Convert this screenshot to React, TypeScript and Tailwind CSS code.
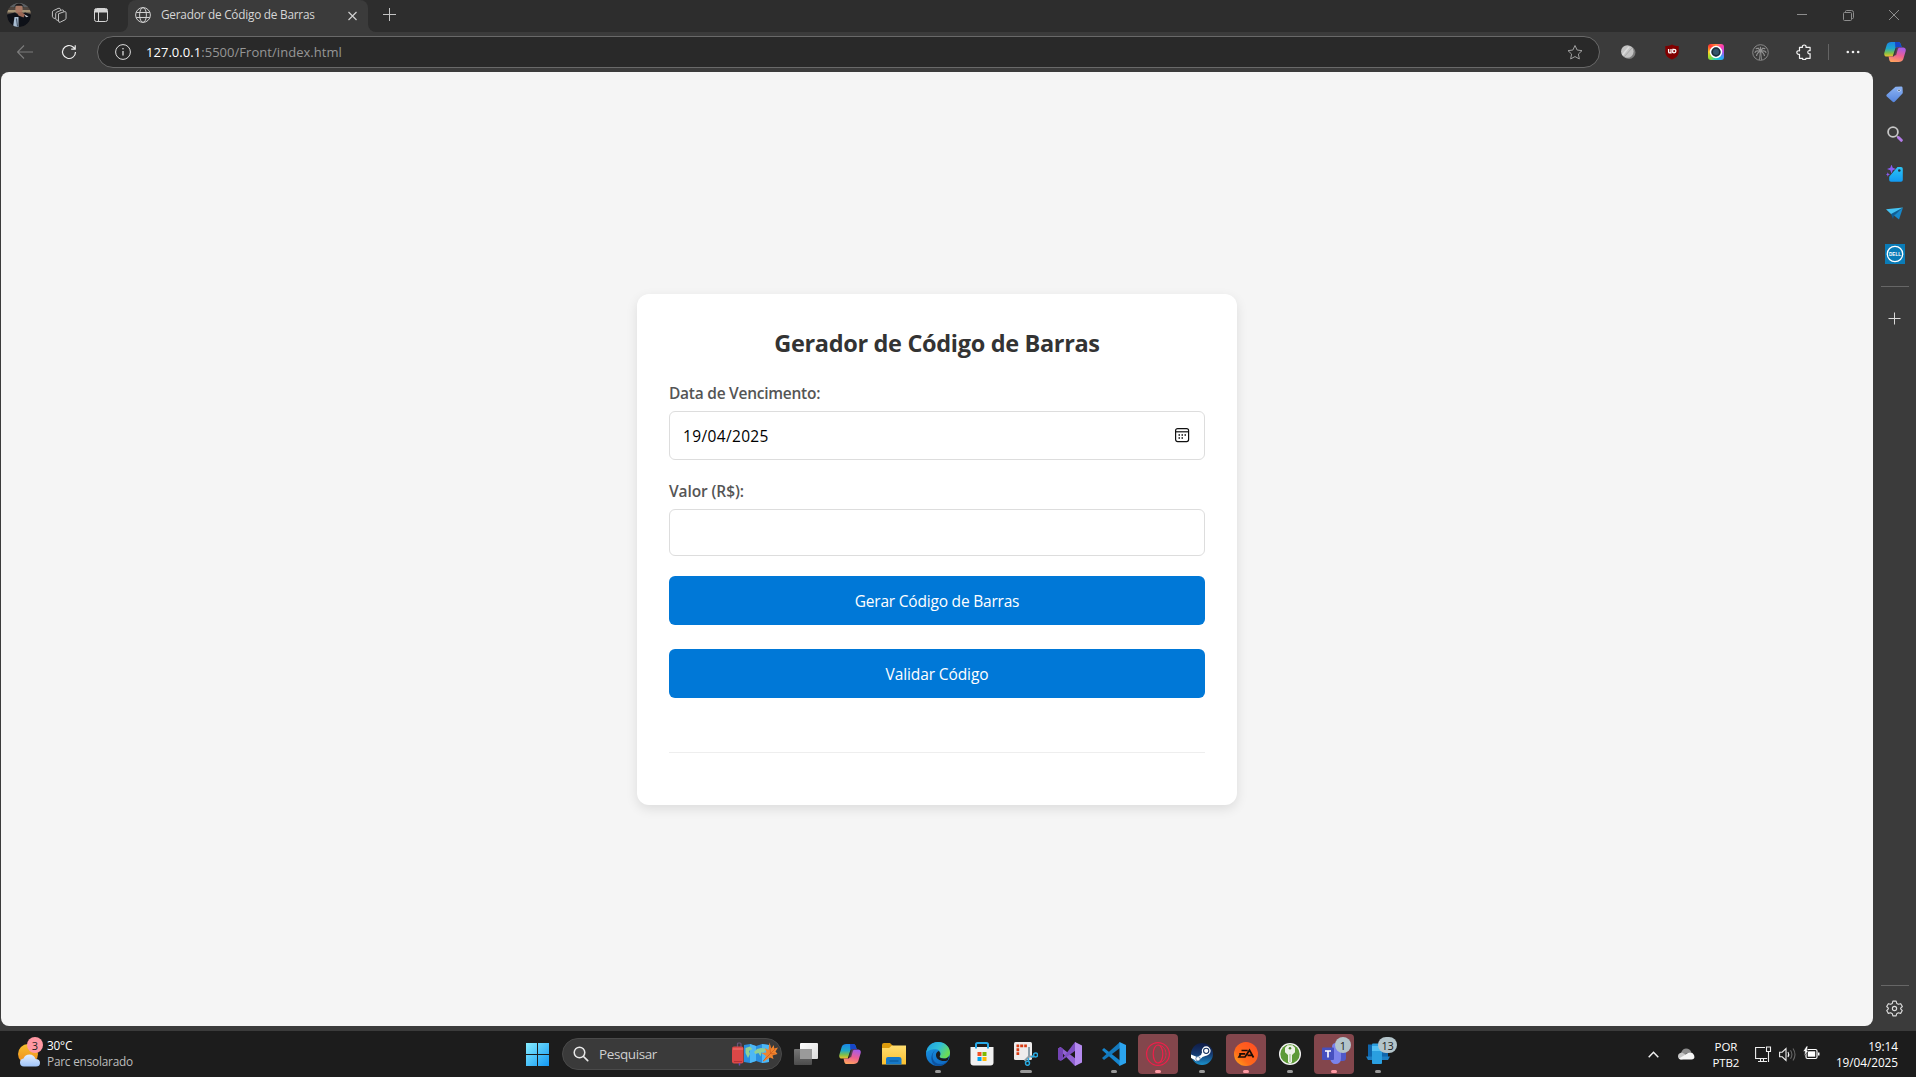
import React from "react";

type P = { children?: React.ReactNode; className?: string };

function Cell({ children, className = "" }: P) {
  return <div className={`flex shrink-0 items-center justify-center ${className}`}>{children}</div>;
}

function Copilot({ size, id }: { size: number; id: string }) {
  return (
    <svg width={size} height={size} viewBox="0 0 24 24">
      <defs>
        <linearGradient id={`${id}a`} x1="0" y1="0" x2="0" y2="1">
          <stop offset="0" stopColor="#1a86e8" />
          <stop offset=".45" stopColor="#1fa8c8" />
          <stop offset=".75" stopColor="#7fc04a" />
          <stop offset="1" stopColor="#f2c12b" />
        </linearGradient>
        <linearGradient id={`${id}b`} x1=".6" y1="0" x2=".3" y2="1">
          <stop offset="0" stopColor="#a65be8" />
          <stop offset=".5" stopColor="#ec5f93" />
          <stop offset="1" stopColor="#ffa45c" />
        </linearGradient>
      </defs>
      <path d="M8 1h7.500c1.600 0 2.300 1 2.800 2.600l.9 3H15c-1.700 0-2.400.8-2.900 2.400L9.500 17H3.200C.8 17-.2 15.200.4 12.800L3 4C3.800 1.900 5.500 1 8 1z" fill={`url(#${id}a)`} />
      <path d="M12 1h3.500c1.600 0 2.300 1 2.800 2.600l.9 3H15c-1.300 0-2.100.6-2.600 1.500z" fill="#1746c8" />
      <path d="M16 23H8.500c-1.600 0-2.300-1-2.800-2.600L5 17h4c1.700 0 2.400-.8 2.900-2.400L14 7.100h6.800c2.400 0 3.400 1.700 2.800 4.100L21 20c-.8 2.100-2.500 3-5 3z" fill={`url(#${id}b)`} />
      <path d="M12.400 8.600 10.500 15.600h2.700l1.700-6c.3-1 .7-1.800 1.600-2.400h-1.700c-1.100 0-1.900.5-2.400 1.400z" fill="#3b3b3b" opacity=".8" />
    </svg>
  );
}

function TitleBar() {
  return (
    <header className="flex h-8 bg-[#3b3b3b]">
      <div className="flex h-8 w-32 shrink-0 rounded-br-lg bg-[#2d2d2d]">
        <Cell className="ml-[7px] h-[30px] w-6">
          <svg width="24" height="24" viewBox="0 0 24 24">
            <defs>
              <clipPath id="av"><circle cx="12" cy="12" r="12" /></clipPath>
            </defs>
            <g clipPath="url(#av)">
              <rect width="24" height="24" fill="#4f463f" />
              <rect width="24" height="4" fill="#5a5f63" />
              <rect y="7" width="24" height="2.500" fill="#a39274" />
              <path d="M0 11.500l8-2 4 3 6-3 6 2v13H0z" fill="#0e1118" />
              <ellipse cx="12" cy="6" rx="3.700" ry="5" fill="#a87864" />
              <path d="M7.500 5C7-1 17-1 16.500 5L15.500 2.800h-7z" fill="#1c1818" />
              <path d="M7.500 14h4v10H6z" fill="#a8bdd2" />
              <path d="M9.500 15.500l1 8" stroke="#3c4a5c" />
              <path d="M10.500 9.500l4-.5 3.500 2.500-1.500 3-5-2z" fill="#9a6755" />
              <path d="M17.500 11.500l4 2-2.500.8z" fill="#c8ccd2" />
            </g>
          </svg>
        </Cell>
        <Cell className="ml-5 h-[30px] w-4">
          <svg width="17" height="17" viewBox="0 0 17 17" fill="none" stroke="#c9c9c9" strokeWidth="1">
            <path d="M8 6.600 14 4.500q2-.5 2 1v6q0 1-1 1.500l-5 2.500q-2 .8-2-1z" />
            <path d="M8 14l-2-.8q-1-.5-1-1.500V6.400q0-1 1-1.400l5.500-2.300q1-.3 1.700.3l.5 1.500" />
            <path d="M4.800 12 2.500 11q-1-.5-1-1.500V4.800q0-1 1-1.400L7.500 1q1-.4 2 0l.8 1.500" />
          </svg>
        </Cell>
        <Cell className="ml-[26px] h-[30px] w-4">
          <svg width="16" height="16" viewBox="0 0 16 16" fill="none">
            <rect x="1.500" y="1.500" width="13" height="13" rx="2" stroke="#d4d4d4" />
            <path d="M2 2h12v3.500H2z" fill="#d4d4d4" />
            <path d="M5.500 5v9.500" stroke="#d4d4d4" />
          </svg>
        </Cell>
      </div>
      <div className="w-60 shrink-0 bg-[#2d2d2d]">
        <div className="flex h-8 w-60 rounded-t-lg bg-[#3b3b3b]">
          <Cell className="ml-[7px] h-[30px] w-4">
            <svg width="16" height="16" viewBox="0 0 16 16" fill="none" stroke="#cfcfcf">
              <circle cx="8" cy="8" r="7.400" />
              <ellipse cx="8" cy="8" rx="3.400" ry="7.400" />
              <path d="M1.200 5.500h13.600M1.200 10.500h13.600" />
            </svg>
          </Cell>
          <div className="ml-[10px] h-[29px] w-[172px] whitespace-nowrap text-[11.800px] leading-[29px] tracking-[-0.23px] text-[#d6d6d6]">
            Gerador de Código de Barras
          </div>
          <Cell className="ml-[11px] h-[31px] w-4">
            <svg width="10" height="10" viewBox="0 0 10 10" stroke="#d0d0d0" strokeWidth="1.200"><path d="M1.500 1l8 8M9.500 1l-8 8" /></svg>
          </Cell>
        </div>
      </div>
      <div className="flex h-8 flex-1 rounded-bl-lg bg-[#2d2d2d]">
        <Cell className="h-[30px] w-[42px]">
          <svg width="14" height="14" viewBox="0 0 14 14" stroke="#c4c4c4"><path d="M1 6.500h13M7.500 0v13" /></svg>
        </Cell>
        <div className="ml-auto flex h-[30px]">
          <Cell className="w-[46px]"><svg width="10" height="10" viewBox="0 0 10 10" stroke="#8d8d8d"><path d="M0 4.500h10" /></svg></Cell>
          <Cell className="w-[46px]">
            <svg width="11" height="11" viewBox="0 0 11 11" fill="none" stroke="#8d8d8d">
              <rect x=".5" y="2.500" width="8" height="8" rx="1" />
              <path d="M2.500 2.500V1.500q0-1 1-1h5q2 0 2 2v5q0 1-1 1h-1" />
            </svg>
          </Cell>
          <Cell className="w-[45px]"><svg width="10" height="10" viewBox="0 0 10 10" stroke="#8d8d8d"><path d="M0 0l10 10M10 0L0 10" /></svg></Cell>
        </div>
      </div>
    </header>
  );
}

function Toolbar() {
  return (
    <div className="flex h-10 items-center bg-[#3b3b3b]">
      <Cell className="ml-[17px] w-4">
        <svg width="16" height="14" viewBox="0 0 16 14" fill="none" stroke="#7c7c7c" strokeWidth="1.100"><path d="M16 7H.8M7 .5.600 7 7 13.500" /></svg>
      </Cell>
      <Cell className="ml-7 w-4">
        <svg width="18" height="18" viewBox="0 0 18 18" fill="none" stroke="#f0f0f0" strokeWidth="1.300"><path d="M16.300 9A7.300 7.300 0 1 1 14 3.700L15.800 5.500M16 1.300v4.500h-4.500" /></svg>
      </Cell>
      <div className="ml-5 flex h-8 w-[1503px] items-center rounded-full border border-[#696969] bg-[#292929]">
        <Cell className="ml-[17px] w-4">
          <svg width="16" height="16" viewBox="0 0 16 16" fill="none" stroke="#dedede">
            <circle cx="8" cy="8" r="7.400" />
            <path d="M8 7v4.500" strokeWidth="1.300" />
            <circle cx="8" cy="4.800" r=".4" />
          </svg>
        </Cell>
        <div className="ml-[15px] pt-px whitespace-nowrap text-[13px] tracking-[0.04px] text-[#969696]">
          <span className="text-white">127.0.0.1</span>:5500/Front/index.html
        </div>
        <Cell className="mr-[16px] ml-auto w-4">
          <svg width="17" height="17" viewBox="0 0 24 24" fill="none" stroke="#a0a0a0" strokeWidth="1.500" strokeLinejoin="round">
            <path d="M12 1.500l3.200 6.800 7.300.9-5.400 5.100 1.400 7.400L12 18.100l-6.500 3.600 1.400-7.400L1.500 9.200l7.300-.9z" />
          </svg>
        </Cell>
      </div>
      <Cell className="ml-[6px] w-11">
        <svg width="16" height="16" viewBox="0 0 16 16">
          <circle cx="9" cy="8.500" r="6.500" fill="#7c7c7c" />
          <circle cx="7.300" cy="7.500" r="6.300" fill="#c4c4c4" />
          <path d="M2.500 11l6.500-8" stroke="#dcdcdc" strokeWidth="1.500" />
          <path d="M4 13l8-9" stroke="#a8a8a8" />
        </svg>
      </Cell>
      <Cell className="w-11">
        <svg width="16" height="16" viewBox="0 0 16 16">
          <path d="M8 .5C6 1.700 3.500 2.100 1.300 2.100V8c0 4.300 4 6.300 6.700 7.600 2.700-1.300 6.700-3.300 6.700-7.600V2.100C12.500 2.100 10 1.700 8 .5z" fill="#800000" />
          <path d="M4.600 5v2.700q0 1.200 1.200 1.200h1.200V5" fill="none" stroke="#fff" strokeWidth="1.300" />
          <path d="M8.900 5.300h1q2 0 2 1.800t-1.800 1.800-1.400-1.300z" fill="none" stroke="#fff" strokeWidth="1.300" />
        </svg>
      </Cell>
      <Cell className="w-11">
        <div className="flex size-4 items-center justify-center rounded-[3px] bg-[conic-gradient(from_0deg,#ff8a3c,#ff3db0,#b34cf0,#2aa8f5,#18d2c8,#8de03a,#ffd21c,#ff3434,#ff8a3c)]">
          <svg width="14" height="14" viewBox="0 0 14 14"><circle cx="7" cy="7" r="5.500" fill="#34566c" stroke="#fff" strokeWidth="1.500" /><circle cx="7" cy="7" r="3.700" fill="none" stroke="#1b2c3a" strokeWidth="1.400" /></svg>
        </div>
      </Cell>
      <Cell className="w-11">
        <svg width="17" height="17" viewBox="0 0 17 17" fill="none" stroke="#929292" strokeWidth=".9">
          <circle cx="8.500" cy="8.500" r="7.800" />
          <path d="M7.500 15.800l.8-8M9.500 15.800l-.8-8" />
          <path d="M8.500 7.500Q6.500 3 3.800 4.800M8.500 7.500Q10.500 3 13.200 4.800M8.500 7.500Q4 6 2.800 8.800M8.500 7.500Q13 6 14.200 8.800M8.500 7.500Q5 8.500 4.500 12M8.500 7.500Q12 8.500 12.500 12M8.500 7.500V2.800M6 3.800l2.500 3.500L11 3.800" strokeWidth="1.200" />
        </svg>
      </Cell>
      <Cell className="w-11">
        <svg width="16" height="16" viewBox="0 0 16 16" fill="none" stroke="#f2f2f2" strokeWidth="1.200" strokeLinejoin="round">
          <path d="M3.500 3.300h3C6 1.800 7 1 8.200 1s2.200.8 1.700 2.300h4.200v3.400c-1.500-.5-2.300.5-2.300 1.500s.8 2 2.300 1.500v4.600H9.900C10.200 15.500 9.200 15.500 8.200 15.500s-2 0-1.600-1.200H3.500v-4C2 10.800.8 9.800.8 8.600s1.200-2.200 2.700-1.700z" />
        </svg>
      </Cell>
      <div className="ml-[2px] h-4 w-px bg-[#646464]" />
      <Cell className="ml-4 w-4">
        <svg width="14" height="4" viewBox="0 0 14 4" fill="#f0f0f0"><circle cx="1.800" cy="2" r="1.300" /><circle cx="7" cy="2" r="1.300" /><circle cx="12.200" cy="2" r="1.300" /></svg>
      </Cell>
      <Cell className="ml-[23px] w-[22px]"><Copilot size={22} id="cp1" /></Cell>
    </div>
  );
}

function Sidebar() {
  return (
    <aside className="flex w-[43px] shrink-0 flex-col items-center bg-[#3b3b3b]">
      <Cell className="mt-px h-[43px]">
        <svg width="17" height="17" viewBox="0 0 17 17">
          <defs><linearGradient id="tg" x1="0" y1="0" x2="0" y2="1"><stop offset="0" stopColor="#8db4f4" /><stop offset="1" stopColor="#5585dd" /></linearGradient></defs>
          <path d="M9.500.8 15.300.4q1 0 1.200 1l.3 5q0 .8-.5 1.400l-7.600 8q-1 .9-2 0L.8 10.500q-.9-1 0-2z" fill="url(#tg)" />
          <circle cx="13" cy="4.300" r="1.500" fill="#c9dafa" /><circle cx="13" cy="4.300" r=".8" fill="#345" />
        </svg>
      </Cell>
      <Cell className="h-9">
        <svg width="16" height="16" viewBox="0 0 16 16" fill="none">
          <circle cx="6" cy="6" r="4.900" stroke="#c6c6c6" strokeWidth="1.800" />
          <path d="M9.800 9.800l1.200 1.200" stroke="#999" strokeWidth="1.500" />
          <path d="M11.500 11.500l2.800 2.800" stroke="#b47be8" strokeWidth="3" strokeLinecap="round" />
        </svg>
      </Cell>
      <Cell className="h-[43px]">
        <svg width="17" height="17" viewBox="0 0 17 17">
          <defs><linearGradient id="bt" x1="0" y1="0" x2="0" y2="1"><stop offset="0" stopColor="#2cc4f5" /><stop offset="1" stopColor="#1199f2" /></linearGradient></defs>
          <path d="M11.500 2h3.500q1.800 0 1.800 1.800V15q0 1.800-1.800 1.800H5q-1.800 0-1.800-1.800v-2.500q0-1 .8-1.800z" fill="url(#bt)" />
          <circle cx="13.300" cy="5.500" r="1.300" fill="#234" />
          <path d="M5.500-.5l1.200 3.300L10 4 6.700 5.200 5.500 8.500 4.300 5.200 1 4l3.300-1.200z" fill="#8a5cf0" />
          <path d="M1.800 7.200l.6 1.600 1.600.7-1.600.6-.6 1.700-.6-1.700L0 9.500l1.200-.7z" fill="#8a5cf0" />
        </svg>
      </Cell>
      <Cell className="h-[37px]">
        <svg width="17" height="13" viewBox="0 0 17 13">
          <path d="M0 2.200 17 .5 8 8.500 5 7z" fill="#44c3f3" />
          <path d="M17 .5 13 12.500 8 8.500z" fill="#1688cc" />
          <path d="M5 7l12-6.500-9 8-1 3.500z" fill="#0f5d94" />
        </svg>
      </Cell>
      <Cell className="h-11">
        <svg width="20" height="20" viewBox="0 0 20 20">
          <rect width="20" height="20" fill="#0a7cb8" />
          <circle cx="10" cy="10" r="7.700" fill="none" stroke="#fff" strokeWidth="1.300" />
          <text x="4" y="12" fontSize="5.500" fontWeight="800" fill="#fff" fontFamily="Liberation Sans, sans-serif" textLength="12" lengthAdjust="spacingAndGlyphs">DELL</text>
        </svg>
      </Cell>
      <div className="mt-[10px] h-px w-7 bg-[#666]" />
      <Cell className="mt-[25px] h-[13px]">
        <svg width="13" height="13" viewBox="0 0 13 13" stroke="#d8d8d8"><path d="M.5 6.500h12M6.500.5v12" /></svg>
      </Cell>
      <div className="mt-auto h-px w-7 bg-[#666]" />
      <Cell className="mt-[13px] mb-[14px] h-[18px]">
        <svg width="17" height="17" viewBox="0 0 24 24" fill="none" stroke="#dcdcdc" strokeWidth="1.600" strokeLinejoin="round">
          <circle cx="12" cy="12" r="3" />
          <path d="M9.700 1.500h4.600l.9 3.300 2.300 1.300 3.300-.9 2.300 4L20.700 11.600v.8L23 14.900l-2.300 4-3.300-.9-2.300 1.300-.8 3.200H9.700l-.8-3.200-2.300-1.300-3.300.9-2.300-4 2.300-2.500v-.8L1 9.200l2.300-4 3.300.9 2.300-1.300z" />
        </svg>
      </Cell>
    </aside>
  );
}

function FormCard() {
  return (
    <div className="flex h-[511px] w-[600px] flex-col rounded-xl bg-white px-8 pt-[31px] shadow-[0_4px_12px_rgba(0,0,0,0.1)]">
      <h1 className="h-9 whitespace-nowrap text-center text-[23.500px] leading-9 font-bold tracking-[-0.33px] text-[#333]">Gerador de Código de Barras</h1>
      <label className="mt-[22px] h-[21px] text-[15.500px] leading-[21px] font-semibold tracking-[-0.25px] text-[#555]">Data de Vencimento:</label>
      <div className="mt-[7px] flex h-[49px] items-center rounded-md border border-[#ddd] px-[13px]">
        <input className="min-w-0 flex-1 pt-[3px] text-[15.500px] tracking-[0.35px] text-black outline-none" defaultValue="19/04/2025" />
        <svg width="16" height="16" viewBox="0 0 16 16" fill="none" stroke="#111" strokeWidth="1.200" className="mr-[1px]">
          <rect x="1.600" y="1.600" width="13" height="13" rx="2" />
          <path d="M1.600 4.800h13" />
          <path d="M4.500 8h1.500M7.500 8H9M10.500 8H12M4.500 11h1.500M7.500 11H9" strokeWidth="1.500" />
        </svg>
      </div>
      <label className="mt-[21px] h-[21px] text-[15.500px] leading-[21px] font-semibold tracking-[-0.1px] text-[#555]">Valor (R$):</label>
      <input className="mt-[7px] h-[47px] w-full rounded-md border border-[#ddd] px-3 outline-none" />
      <button className="mt-5 h-[49px] shrink-0 rounded-md bg-[#0078d7] pt-[4px] text-[15.500px] tracking-[-0.2px] text-white">Gerar Código de Barras</button>
      <button className="mt-6 h-[49px] shrink-0 rounded-md bg-[#0078d7] pt-[4px] text-[15.500px] tracking-[-0.1px] text-white">Validar Código</button>
      <div className="mt-[54px] h-px w-full bg-[#eee]" />
    </div>
  );
}

function TaskApp({ children, on = false, mark = "dot" }: { children: React.ReactNode; on?: boolean; mark?: "dot" | "bar" | "none" }) {
  return (
    <div className="flex w-11 shrink-0 justify-center">
      <div className={`relative flex h-10 w-10 items-center justify-center rounded-[4px] ${on ? "bg-[#83464c]" : ""}`}>
        {children}
        {mark !== "none" && (
          <span className={`absolute bottom-[1px] h-[3px] rounded-full ${mark === "bar" ? "w-3" : "w-[6px]"} ${on ? "bg-[#ff9aa4]" : "bg-[#999]"}`} />
        )}
      </div>
    </div>
  );
}

function TaskApps() {
  return (
    <div className="flex items-center">
      <TaskApp mark="none">
        <svg width="24" height="22" viewBox="0 0 24 22">
          <defs>
            <linearGradient id="tv" x1="0" y1="0" x2="1" y2="1"><stop offset="0" stopColor="#fff" /><stop offset="1" stopColor="#dcdcdc" /></linearGradient>
            <linearGradient id="tw" x1="0" y1="0" x2="0" y2="1"><stop offset="0" stopColor="#777" /><stop offset="1" stopColor="#4c4c4c" /></linearGradient>
          </defs>
          <rect x="6" width="18" height="16" rx="1" fill="url(#tv)" />
          <rect y="6" width="18" height="16" rx="1" fill="url(#tw)" />
          <rect x="6" y="6" width="12" height="10" fill="#9a9a9a" />
        </svg>
      </TaskApp>
      <TaskApp mark="none"><Copilot size={22} id="cp2" /></TaskApp>
      <TaskApp mark="none">
        <svg width="24" height="24" viewBox="0 0 24 24">
          <defs><linearGradient id="fd" x1="0" y1="0" x2="0" y2="1"><stop offset="0" stopColor="#ffdd70" /><stop offset="1" stopColor="#fbc02f" /></linearGradient></defs>
          <path d="M0 3q0-2 2-2h6l2.500 2.500V8H0z" fill="#dc9b0c" />
          <path d="M0 6h7l3-2.500h14V22.500H0z" fill="url(#fd)" />
          <path d="M4 22.500V17q0-2 2-2h11q2.500 0 2.500 2v5.500z" fill="#1579c9" />
          <path d="M7.500 19h9" stroke="#0b5a9c" strokeWidth="1.200" />
        </svg>
      </TaskApp>
      <TaskApp>
        <svg width="24" height="24" viewBox="0 0 24 24">
          <defs>
            <linearGradient id="e1" x1="0" y1="0" x2="1" y2=".5"><stop offset="0" stopColor="#1c9de0" /><stop offset=".55" stopColor="#30bfd8" /><stop offset="1" stopColor="#6bdc55" /></linearGradient>
            <linearGradient id="e2" x1="0" y1="0" x2=".4" y2="1"><stop offset="0" stopColor="#1b9ae6" /><stop offset="1" stopColor="#0f6cc4" /></linearGradient>
          </defs>
          <circle cx="12" cy="12" r="12" fill="url(#e2)" />
          <path d="M.2 10.500C1.500 4 6 0 12 0c7 0 12 5 12 10.500 0 4-3 6-6 6-3.500 0-4.800-1.200-4.300-2.300 2-2.500.8-6.700-4-7C5.500 7 1.500 8.500.2 10.500z" fill="url(#e1)" />
          <path d="M9.500 8.500c-4 2.500-4 9 0 12 4 2.800 9.500 2 12.500-2-2 3.300-5.500 5.500-10 5.500C3.500 23 4 11 9.500 8.500z" fill="#0d529f" />
          <path d="M13.700 14.200c-.5 1.100.8 2.300 4.300 2.300 2.200 0 4.300-.9 5.300-2.800l-1.500 4.500C17 20.500 9.500 18 10 12.500c.3-1.800 1.500-3 2.800-3.500 1.700 1.500 1.900 3.500.9 5.200z" fill="#1c1c1c" />
        </svg>
      </TaskApp>
      <TaskApp mark="none">
        <svg width="24" height="24" viewBox="0 0 24 24">
          <path d="M6 6V2.500Q6 1 7.500 1h9Q18 1 18 2.500V6" fill="none" stroke="#27a9e8" strokeWidth="2" />
          <path d="M.5 5h23v15.500q0 3-3 3H3.500q-3 0-3-3z" fill="#f1f1f1" />
          <path d="M7.500 10h4v4h-4z" fill="#f25022" /><path d="M12.500 10h4v4h-4z" fill="#7fba00" />
          <path d="M7.500 15h4v4h-4z" fill="#00a4ef" /><path d="M12.500 15h4v4h-4z" fill="#ffb900" />
          <path d="M6 6.500V4M18 6.500V4" stroke="#27a9e8" strokeWidth="2" />
        </svg>
      </TaskApp>
      <TaskApp mark="bar">
        <svg width="24" height="24" viewBox="0 0 24 24">
          <rect x="0" y="0" width="18" height="18" rx="1.500" fill="#eeecec" />
          <path d="M2.500 2.500h2.700v2.700H2.500zM6.200 2.500h3v2.700h-3zM10.200 2.500h2.700v2.700h-2.700zM2.500 6.200h2.700v3H2.500zM2.500 10.200h2.700v2.700H2.500z" fill="#d83b12" />
          <path d="M15 5v9.500h5M15 14.500l-4.500 4.500" fill="none" stroke="#8d9da7" strokeWidth="2" />
          <circle cx="13.500" cy="21.300" r="2" fill="none" stroke="#29abe2" strokeWidth="1.500" />
          <circle cx="21.600" cy="13" r="2" fill="none" stroke="#29abe2" strokeWidth="1.500" />
          <path d="M14.500 19.500V16M20 14l-3 1" stroke="#29abe2" strokeWidth="1.500" />
        </svg>
      </TaskApp>
      <TaskApp mark="none">
        <svg width="24" height="24" viewBox="0 0 24 24">
          <path d="M0 6.500 2.500 5 20 18.500 17 24z" fill="#9163d2" />
          <path d="M0 6.500 2.500 5 5 7v10l-2.500 2L0 17.500z" fill="#7444b4" />
          <path d="M2.500 19 17 0l2 3v4.500L5 17.500z" fill="#7e4fc2" />
          <path d="M17 0l7 3.500v17L17 24z" fill="#b58aef" />
        </svg>
      </TaskApp>
      <TaskApp>
        <svg width="24" height="24" viewBox="0 0 24 24">
          <path d="M0 8l2-2L18 18.500V24z" fill="#1686cf" />
          <path d="M0 16l2 2L18 6V0z" fill="#1479bd" />
          <path d="M17.500 0 24 3v18l-6.500 3z" fill="#2ba3ee" />
        </svg>
      </TaskApp>
      <TaskApp on>
        <svg width="24" height="24" viewBox="0 0 24 24" fill="none" stroke="#ee1f4a" strokeWidth="1.200">
          <circle cx="12" cy="12" r="11.400" />
          <ellipse cx="12" cy="12" rx="4.800" ry="9" />
          <path d="M12.500 3c5.500 1 7.500 5 7.500 9s-2 8-7.500 9" strokeWidth="1" />
        </svg>
      </TaskApp>
      <TaskApp>
        <svg width="24" height="24" viewBox="0 0 24 24">
          <defs><linearGradient id="st" x1="0" y1="0" x2="0" y2="1"><stop offset="0" stopColor="#101c46" /><stop offset=".5" stopColor="#15386f" /><stop offset="1" stopColor="#1a93cf" /></linearGradient></defs>
          <circle cx="12" cy="12" r="11" fill="url(#st)" />
          <path d="M1 12.500l6 2.600 4-2 1.500-4 5.500 4-5.500 2-3.500 3.400q-3 2-5-1L1 16z" fill="#fff" />
          <circle cx="16.200" cy="8.800" r="3.800" fill="#15305f" stroke="#fff" strokeWidth="1.300" />
          <circle cx="16.200" cy="8.800" r="2.100" fill="#fff" />
          <circle cx="8" cy="16.800" r="2.200" fill="#fff" stroke="#1a4a86" strokeWidth=".6" />
        </svg>
      </TaskApp>
      <TaskApp on>
        <svg width="24" height="24" viewBox="0 0 24 24">
          <defs><linearGradient id="ea" x1="0" y1="1" x2="1" y2="0"><stop offset="0" stopColor="#ffb01c" /><stop offset=".35" stopColor="#ff6a1a" /><stop offset="1" stopColor="#ff4b24" /></linearGradient></defs>
          <circle cx="12" cy="12" r="12" fill="url(#ea)" />
          <path d="M7.500 8.500h6.200M5.200 11.800h6M6.800 11.800 5 15h6l4.500-6.800L19.500 15.500M13.500 13.400h5.500" fill="none" stroke="#1a0d08" strokeWidth="1.700" />
        </svg>
      </TaskApp>
      <TaskApp>
        <svg width="24" height="24" viewBox="0 0 24 24">
          <circle cx="12" cy="12" r="11" fill="#f4f4f4" />
          <circle cx="12" cy="12" r="9.700" fill="#5d9a36" />
          <path d="M9.500 3.200h5l2.500 2.500v4.500L14 13v7l-2 2-2-2v-7L7 10.200V5.700z" fill="#eef2e8" />
          <circle cx="12" cy="6.200" r="1.300" fill="#4c8a2b" />
          <path d="M12 12v8" stroke="#98b884" />
        </svg>
      </TaskApp>
      <TaskApp on>
        <svg width="24" height="24" viewBox="0 0 24 24">
          <circle cx="14" cy="5" r="4" fill="#7b83eb" />
          <rect x="16" y="8" width="8" height="11" rx="3" fill="#5059c9" />
          <path d="M8 8h11v8q0 6-5.500 6Q9 22 8 16z" fill="#7b83eb" />
          <rect x="0" y="5.500" width="12" height="12.500" rx="1" fill="#4650bf" />
          <path d="M3 9h6M6 9v6.500" stroke="#fff" strokeWidth="1.600" />
        </svg>
        <span className="absolute top-[3px] right-[3px] flex h-4 w-4 items-center justify-center rounded-full bg-[#b3c4ca] text-[11px] leading-none text-[#222]">1</span>
      </TaskApp>
      <TaskApp>
        <svg width="24" height="24" viewBox="0 0 24 24">
          <path d="M2 2.500h20v13H2z" fill="#0f66ad" />
          <path d="M0 14.500h24L22 18H2z" fill="#1d7fc4" />
          <rect x="6" y="1.500" width="10" height="20.500" rx="1" fill="#2a9fe0" />
          <path d="M6 4h10v5H6z" fill="#54c1f4" />
        </svg>
        <span className="absolute top-[3px] right-[1px] flex h-4 w-[19px] items-center justify-center rounded-full bg-[#b3c4ca] text-[11px] leading-none tracking-[-0.3px] text-[#222]">13</span>
      </TaskApp>
    </div>
  );
}

function Taskbar() {
  return (
    <footer className="flex h-[46px] items-center bg-[#1c1c1c] text-[12px]">
      <div className="flex w-[526px] shrink-0 items-center pl-[18px]">
        <div className="relative h-[30px] w-6">
          <svg width="24" height="30" viewBox="0 0 24 30">
            <defs>
              <linearGradient id="sn" x1="0" y1="0" x2="0" y2="1"><stop offset="0" stopColor="#f6c02d" /><stop offset="1" stopColor="#f0891d" /></linearGradient>
              <linearGradient id="cl" x1="0" y1="0" x2="0" y2="1"><stop offset="0" stopColor="#e3efff" /><stop offset="1" stopColor="#9fc3f8" /></linearGradient>
            </defs>
            <circle cx="10" cy="15" r="10" fill="url(#sn)" />
            <path d="M6 27.500q-4 0-4-4 0-3.500 3.500-4Q7 15.500 11.500 15.500t6 4.500q4.500 0 4.500 4 0 3.500-4 3.500z" fill="url(#cl)" />
          </svg>
          <span className="absolute -top-[2px] -right-px flex size-4 items-center justify-center rounded-full bg-[#ff98a3] text-[11px] leading-none text-[#222]">3</span>
        </div>
        <div className="mb-[2px] ml-[5px] text-[11.800px] leading-4 tracking-[-0.2px]">
          <div className="text-white">30°C</div>
          <div className="text-[#bdbdbd]">Parc ensolarado</div>
        </div>
      </div>
      <svg width="23" height="23" viewBox="0 0 23 23" className="shrink-0">
        <defs><linearGradient id="wl" x1="0" y1="0" x2="1" y2="1"><stop offset="0" stopColor="#86edff" /><stop offset="1" stopColor="#1298f5" /></linearGradient></defs>
        <path d="M0 0h11v11H0zM12 0h11v11H12zM0 12h11v11H0zM12 12h11v11H12z" fill="url(#wl)" />
      </svg>
      <div className="ml-[13px] flex h-8 w-[220px] shrink-0 items-center rounded-full border border-[#4a4a4a] bg-[#3a3a3a]">
        <svg width="16" height="16" viewBox="0 0 16 16" fill="none" className="ml-[10px]">
          <circle cx="6.500" cy="6.500" r="5.300" stroke="#e8e8e8" strokeWidth="1.500" fill="#4a4a4a" />
          <path d="M10.500 10.500l4.200 4.200" stroke="#e8e8e8" strokeWidth="1.700" strokeLinecap="round" />
        </svg>
        <span className="ml-[10px] text-[13.500px] tracking-[-0.4px] text-[#cfcfcf]">Pesquisar</span>
        <svg width="46" height="24" viewBox="0 0 46 24" className="mr-[3px] ml-auto">
          <path d="M5.500 5V2q0-1 1-1H8q1 0 1 1v3" fill="none" stroke="#6a5478" strokeWidth="1.200" />
          <path d="M12 3l6-1 6 2 6-2 7 1v17l-7 1-6-2-6 2-6-1z" fill="#2b8fe0" />
          <path d="M18 2l6 2v15l-6 2zM30 2l7 1v17l-7 1z" fill="#4db8f6" />
          <path d="M13.500 6l4.500-1.500 2.500 2.500-3.500 2 1 3-2 4-2.500-5zM22 10l3-3 4-1 6 1-3 3-2.500.5-1 4-2-3.500-3 1z" fill="#8fcf96" />
          <rect x="0" y="4.500" width="11.500" height="17" rx="2" fill="#dc4747" />
          <path d="M1 7h10" stroke="#f27a72" />
          <path d="M2 19.500h8" stroke="#b53038" />
          <path d="M7.500 21v2.500" stroke="#6b4bb0" strokeWidth="1.500" />
          <path d="M37.500.5l1.800 6 2.500-3.500.4 3.500L46 5.500l-2.500 4 2 2.500-5 1.500 1 3.500-3.500-1.500-7 4.500 3-6-4.500-3 5-.500-1.500-4.500 3.500 2z" fill="#f0842e" />
          <path d="M43 7 31 19M38.500 11 37.800 4M38 11.500l5 .5" stroke="#c95618" strokeWidth=".7" />
        </svg>
      </div>
      <div className="ml-[2px]"><TaskApps /></div>
      <div className="ml-auto flex items-center text-white">
        <svg width="11" height="7" viewBox="0 0 11 7" fill="none" stroke="#f0f0f0" strokeWidth="1.500"><path d="M.7 6.200 5.500 1.300l4.800 4.900" /></svg>
        <svg width="17" height="12" viewBox="0 0 17 12" className="ml-[19px]">
          <path d="M3 7Q3 1 8 .5q4 0 5.500 4Z" fill="#8c8c8c" />
          <path d="M3 11.500Q0 11 0 8.200 0 5 4 4.500l9 5z" fill="#c7c7c7" />
          <path d="M3 11.500q-1 0-2-1L10 5q4-1.500 6 2 1.500 4.500-2.500 4.500z" fill="#f6f6f6" />
        </svg>
        <div className="mt-px ml-[17px] w-[28px] text-center text-[11.500px] leading-4 tracking-[-0.15px]">
          <div>POR</div>
          <div>PTB2</div>
        </div>
        <svg width="17" height="17" viewBox="0 0 17 17" fill="none" stroke="#eee" strokeWidth="1.100" className="ml-[15px]">
          <path d="M10 1.500H.6v11h11.500M3 15.500h9M5.500 12.500v3M8.500 12.500v3" />
          <path d="M11.500 1h4v4.500h-4zM13.500 5.500v10.500" />
        </svg>
        <svg width="17" height="15" viewBox="0 0 17 15" fill="none" stroke="#eee" strokeWidth="1.100" className="ml-[7px]">
          <path d="M.6 5.200h2.600L7 1.600v11.800L3.200 9.800H.6z" />
          <path d="M9 5q1.500 2.500 0 5" />
          <path d="M11.500 3.300q2.800 4.200 0 8.400M14 1.500q4 6 0 12" stroke="#666" />
        </svg>
        <svg width="17" height="14" viewBox="0 0 17 14" className="mb-[2px] ml-[7px]">
          <rect x="3" y="3.500" width="11" height="9" rx="1.500" fill="none" stroke="#fff" strokeWidth="1.200" />
          <rect x="4.800" y="5.300" width="7.400" height="5.400" fill="#fff" />
          <path d="M15 6.500h1.500v3H15z" fill="#fff" />
          <path d="M3.500 0 0 5.500h2L1 10l4.800-5.500H4L5 0z" fill="#fff" stroke="#1c1c1c" strokeWidth=".6" />
        </svg>
        <div className="mr-[18px] ml-4 text-right text-[11.800px] leading-4 tracking-[-0.05px]">
          <div>19:14</div>
          <div>19/04/2025</div>
        </div>
      </div>
    </footer>
  );
}

export default function App() {
  return (
    <div className="flex h-[1077px] w-[1916px] flex-col overflow-hidden bg-[#3b3b3b] font-['Open_Sans','Noto_Sans',sans-serif]">
      <TitleBar />
      <Toolbar />
      <div className="flex h-[959px]">
        <main className="mb-[5px] ml-px flex w-[1872px] shrink-0 items-center justify-center rounded-lg bg-[#f5f5f5]">
          <FormCard />
        </main>
        <Sidebar />
      </div>
      <Taskbar />
    </div>
  );
}
